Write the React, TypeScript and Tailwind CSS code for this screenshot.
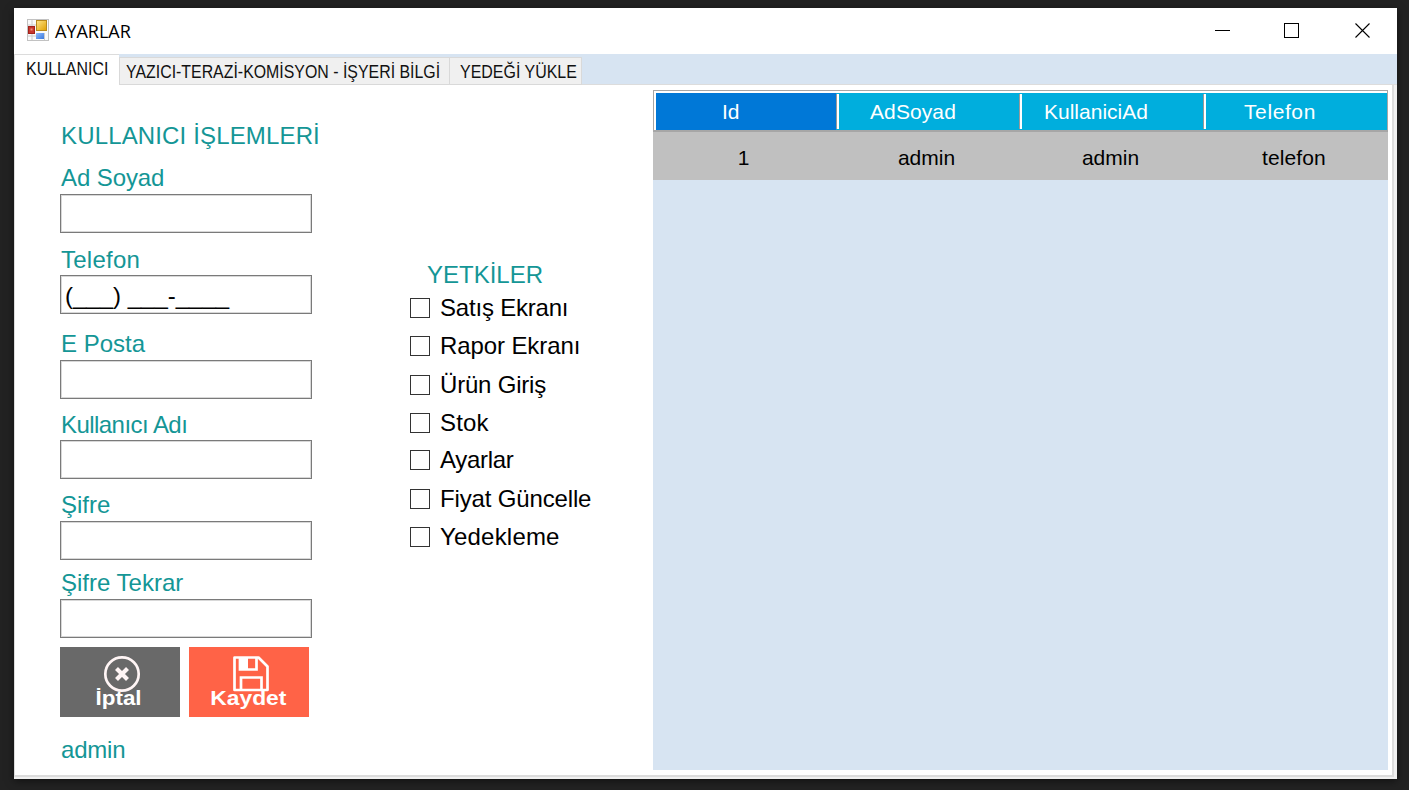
import React from "react";

const fields = [
  { label: "Ad Soyad", gap: "pt-[14px]", inner: "mb-[2px] tracking-[-0.1px]", value: "" },
  { label: "Telefon", gap: "pt-[13px]", inner: "mb-[1px] tracking-[0.25px]", value: "(___) ___-____" },
  { label: "E Posta", gap: "pt-[16px]", inner: "mb-[2px]", value: "" },
  { label: "Kullanıcı Adı", gap: "pt-[12px]", inner: "mb-[1px] tracking-[-0.55px]", value: "" },
  { label: "Şifre", gap: "pt-[12px]", inner: "mb-[2px]", value: "" },
  { label: "Şifre Tekrar", gap: "pt-[9px]", inner: "mb-[2px]", value: "" },
];

const permissions = [
  { name: "Satış Ekranı", style: "h-[38px] tracking-[-0.2px]" },
  { name: "Rapor Ekranı", style: "h-[38px] tracking-[-0.1px]" },
  { name: "Ürün Giriş", style: "h-[39px] pt-px tracking-[-0.2px]" },
  { name: "Stok", style: "h-[37px] tracking-[0.2px]" },
  { name: "Ayarlar", style: "h-[38px] tracking-[-0.3px]" },
  { name: "Fiyat Güncelle", style: "h-[39px] pt-px tracking-[-0.15px]" },
  { name: "Yedekleme", style: "h-[37px] tracking-[0.2px]" },
];

function AppIcon() {
  return (
    <svg width="22" height="22" viewBox="0 0 22 22">
      <defs>
        <linearGradient id="gold" x1="0" y1="0" x2="1" y2="1">
          <stop offset="0" stopColor="#ffe58a" />
          <stop offset="1" stopColor="#e0a000" />
        </linearGradient>
        <linearGradient id="blue" x1="0" y1="0" x2="1" y2="1">
          <stop offset="0" stopColor="#8fbcff" />
          <stop offset="1" stopColor="#3a78dc" />
        </linearGradient>
      </defs>
      <rect x="0.5" y="0.5" width="21" height="21" fill="#fafafa" stroke="#c2c2c2" />
      <path d="M5 1v20M1 17h8M1 6h8M17.500 14v7" stroke="#cccccc" />
      <rect x="1.500" y="7.500" width="6" height="7" fill="#c8372d" stroke="#a3231c" />
      <rect x="3.500" y="9.500" width="2" height="2" fill="#ef8d7c" />
      <rect x="9.500" y="1.500" width="10" height="10" fill="url(#gold)" stroke="#b98a1c" />
      <rect x="9" y="14" width="8" height="6" fill="url(#blue)" />
    </svg>
  );
}

function TitleBar() {
  return (
    <header className="flex h-[46px] shrink-0 items-center bg-white pb-[2px] pl-[13px] text-black">
      <AppIcon />
      <h1 className="ml-[6px] flex-1 origin-left pt-px font-['Open_Sans',sans-serif] text-[18px] leading-6">
        AYARLAR
      </h1>
      <div className="flex items-center pt-[2px]">
        <svg className="mr-[53px]" width="16" height="16" viewBox="0 0 16 16" shapeRendering="crispEdges">
          <path d="M0 7.500h15" stroke="#000" />
        </svg>
        <svg className="mr-[55px]" width="16" height="16" viewBox="0 0 16 16" shapeRendering="crispEdges">
          <rect x="0.500" y="0.500" width="14" height="14" fill="none" stroke="#000" />
        </svg>
        <svg className="mr-[26px]" width="16" height="16" viewBox="0 0 16 16">
          <path d="M0.500 0.500l14 14M14.500 0.500l-14 14" stroke="#000" strokeWidth="1.100" />
        </svg>
      </div>
    </header>
  );
}

function Tabs() {
  return (
    <nav className="flex h-[31px] shrink-0 items-end bg-[#d7e4f2] text-[18px] leading-[22px] whitespace-nowrap text-[#111]">
      <div className="z-10 h-[31px] w-[105px] border-t border-l border-[#dcdcdc] bg-white pt-[3px] pl-[11px]">
        <span className="inline-block origin-left scale-x-[0.885]">KULLANICI</span>
      </div>
      <div className="h-[28px] w-[331px] border border-[#d9d9d9] bg-[#f0f0f0] pt-[3px] pl-[6px]">
        <span className="inline-block origin-left scale-x-[0.883]">YAZICI-TERAZİ-KOMİSYON - İŞYERİ BİLGİ</span>
      </div>
      <div className="h-[28px] w-[132px] border border-l-0 border-[#d9d9d9] bg-[#f0f0f0] pt-[3px] pl-[10px]">
        <span className="inline-block origin-left scale-x-[0.887]">YEDEĞİ YÜKLE</span>
      </div>
      <div className="h-px flex-1 bg-[#dcdcdc]" />
    </nav>
  );
}

function UserForm() {
  return (
    <section className="flex w-[252px] flex-col pt-[37px] text-[24px] leading-7 text-[#149696]">
      <h2 className="pl-px tracking-[0.15px] whitespace-nowrap">KULLANICI İŞLEMLERİ</h2>
      {fields.map((f) => (
        <label key={f.label} className={`flex flex-col ${f.gap}`}>
          <span className={`pl-px ${f.inner}`}>{f.label}</span>
          <input
            type="text"
            defaultValue={f.value}
            className="h-[39px] w-[252px] border border-[#7a7a7a] bg-white pt-[2px] pl-[4px] text-[24px] text-black shadow-[inset_0_0_0_1px_#d8d8d8] outline-none"
          />
        </label>
      ))}
      <div className="mt-[9px] flex gap-[9px] text-[20px] leading-6 font-bold text-white">
        <button className="flex h-[70px] w-[120px] flex-col items-center bg-[#696969] pt-[8px]">
          <svg width="38" height="38" viewBox="0 0 38 38" className="ml-[3px] shrink-0">
            <circle cx="19" cy="19" r="16.700" fill="none" stroke="#fff5f5" strokeWidth="2.700" />
            <path d="M13.500 13.500l11 11M24.500 13.500l-11 11" stroke="#fff5f5" strokeWidth="4.200" />
          </svg>
          <span className="-mt-[7px] mr-[3px] scale-x-[1.120]">İptal</span>
        </button>
        <button className="flex h-[70px] w-[120px] flex-col items-center bg-[#ff6347] pt-[8px]">
          <svg width="38" height="38" viewBox="0 0 38 38" className="ml-[3px] shrink-0">
            <path d="M2.500 2.500h24l9 9v23.500h-33z" fill="none" stroke="#fff" strokeWidth="2.700" strokeLinejoin="round" />
            <path d="M8 2.500v12h16.500v-12M9 35V22.500h20.500V35" fill="none" stroke="#fff" strokeWidth="2.700" />
            <path d="M8 2h8v13H8z" fill="#fff" />
          </svg>
          <span className="-mt-[7px] mr-px scale-x-[1.140]">Kaydet</span>
        </button>
      </div>
      <p className="mt-[19px] pl-px tracking-[-0.2px]">admin</p>
    </section>
  );
}

function Permissions() {
  return (
    <section className="ml-[98px] w-[243px] shrink-0 pt-[176px] text-[24px]">
      <h2 className="pl-[17px] leading-7 text-[#149696]">YETKİLER</h2>
      <div className="text-black">
        {permissions.map((p) => (
          <label key={p.name} className={`flex items-center whitespace-nowrap ${p.style}`}>
            <input
              type="checkbox"
              className="size-[20px] shrink-0 appearance-none border border-[#333] bg-white"
            />
            <span className="ml-[10px]">{p.name}</span>
          </label>
        ))}
      </div>
    </section>
  );
}

function UserGrid() {
  return (
    <section className="mt-[5px] flex h-[680px] w-[735px] flex-col bg-[#d7e4f2] text-[21px]">
      <div className="flex h-[42px] shrink-0 border-t border-r border-b-2 border-l border-[#a6a6a6] bg-white pt-[2px] pl-[2px] text-white">
        <div className="flex h-full w-[180px] items-center bg-[#0078d7] pt-px pl-[66px]">Id</div>
        <div className="flex h-full flex-1 items-center bg-[#00aedd]">
          <div className="h-[35px] w-[3px] border-l border-[#999] bg-white" />
          <span className="w-[180px] pt-px pl-[31px] tracking-[0.1px]">AdSoyad</span>
          <div className="h-[35px] w-[3px] border-l border-[#999] bg-white" />
          <span className="w-[181px] pt-px pl-[22px]">KullaniciAd</span>
          <div className="h-[35px] w-[3px] border-l border-[#999] bg-white" />
          <span className="pt-px pl-[38px] tracking-[0.6px]">Telefon</span>
        </div>
      </div>
      <div className="grid h-[48px] shrink-0 grid-cols-[181px_185px_183px_184px] items-center bg-[#c0c0c0] pt-[4px] text-center text-black">
        <span>1</span>
        <span>admin</span>
        <span>admin</span>
        <span className="tracking-[0.1px]">telefon</span>
      </div>
    </section>
  );
}

export default function App() {
  return (
    <div className="h-[790px] w-[1409px] overflow-hidden bg-[#222222] px-[14px] pt-[8px] pr-[12px] font-['Liberation_Sans',Arial,sans-serif]">
      <main className="flex h-[771px] w-[1383px] flex-col bg-[#f0f0f0] shadow-[0_2px_8px_rgba(0,0,0,0.5)]">
        <TitleBar />
        <Tabs />
        <div className="mr-[3px] mb-[2px] flex flex-1 border-r-2 border-b-2 border-l border-[#dcdcdc] bg-white pl-[45px]">
          <UserForm />
          <Permissions />
          <UserGrid />
        </div>
      </main>
    </div>
  );
}
